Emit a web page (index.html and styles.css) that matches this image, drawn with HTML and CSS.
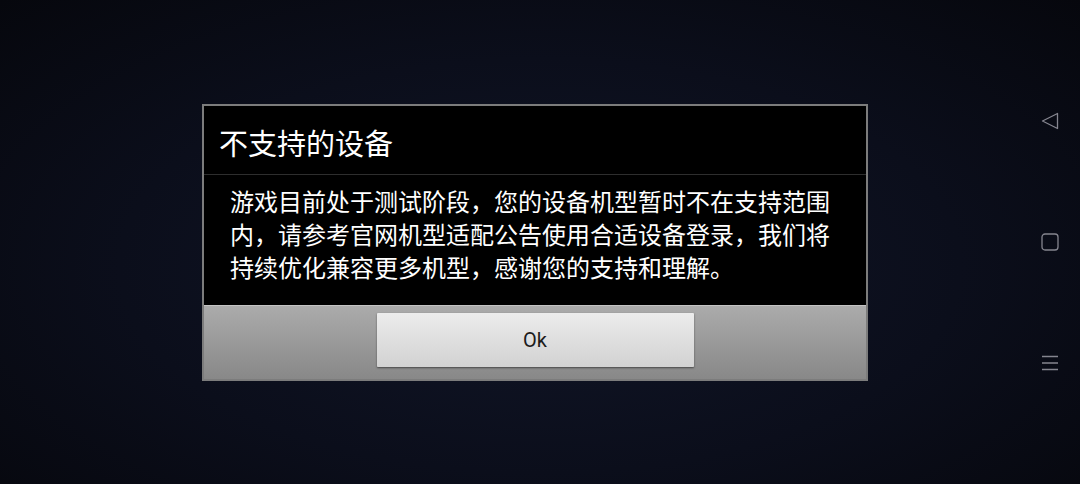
FILE: index.html
```html
<!DOCTYPE html>
<html lang="zh-CN">
<head>
    <meta charset="UTF-8">
    <meta name="viewport" content="width=device-width, initial-scale=1.0">
    <title>不支持的设备</title>
    <link rel="stylesheet" href="styles.css">
</head>
<body>
    <div class="screen">
        <main class="stage">
            <div class="dialog">
                <div class="dialog-title">不支持的设备</div>
                <div class="dialog-body">
                    <p>游戏目前处于测试阶段，您的设备机型暂时不在支持范围内，请参考官网机型适配公告使用合适设备登录，我们将持续优化兼容更多机型，感谢您的支持和理解。</p>
                </div>
                <div class="dialog-buttons">
                    <button type="button">Ok</button>
                </div>
            </div>
        </main>

        <nav class="navbar">
            <svg width="20" height="20" viewBox="0 0 20 20">
                <path d="M17.5 2.5 L2.5 10 L17.5 17.5 Z" fill="none" stroke="#85858f" stroke-width="1.3" stroke-linejoin="round"/>
            </svg>
            <svg width="20" height="20" viewBox="0 0 20 20">
                <rect x="2" y="2" width="16" height="16" rx="3" fill="none" stroke="#85858f" stroke-width="1.3"/>
            </svg>
            <svg width="20" height="20" viewBox="0 0 20 20">
                <path d="M2 3.5 H18 M2 10 H18 M2 16.5 H18" stroke="#85858f" stroke-width="1.3"/>
            </svg>
        </nav>
    </div>
</body>
</html>
```

FILE: styles.css
```css
html, body {
    margin: 0;
    padding: 0;
}
body {
    font-family: "Noto Sans CJK SC", "Noto Sans", sans-serif;
    background: radial-gradient(ellipse at 50% 55%, #111628 0%, #0b0e1b 55%, #06070d 100%);
    width: 1080px;
    height: 484px;
    overflow: hidden;
}
.screen {
    display: flex;
    height: 484px;
}
.stage {
    flex: 1;
    display: flex;
    align-items: center;
    padding-left: 202px;
    padding-top: 0;
}
.dialog {
    width: 662px;
    border: 2px solid #7c7c7c;
    background: #000;
}
.dialog-title {
    height: 69px;
    display: flex;
    align-items: center;
    padding: 4px 0 0 15px;
    box-sizing: border-box;
    color: #fff;
    font-size: 29px;
    border-bottom: 1px solid #2e2e2e;
}
.dialog-body {
    padding: 9px 30px 19px 26px;
    height: 130px;
    box-sizing: border-box;
}
.dialog-body p {
    margin: 0;
    color: #fff;
    font-size: 24px;
    line-height: 33px;
}
.dialog-buttons {
    height: 74px;
    box-sizing: border-box;
    padding-top: 7px;
    display: flex;
    justify-content: center;
    align-items: flex-start;
    background: linear-gradient(#ababab, #888);
    border-top: 1px solid #c4c4c4;
}
.dialog-buttons button {
    width: 317px;
    height: 54px;
    border: none;
    border-radius: 1px;
    background: linear-gradient(#ececec, #d2d2d2);
    box-shadow: 0 1px 2px rgba(0, 0, 0, 0.5);
    font-family: Roboto, "Noto Sans", sans-serif;
    font-size: 20px;
    color: #1c1c1c;
    padding: 0;
}
.navbar {
    width: 60px;
    display: flex;
    flex-direction: column;
    align-items: center;
    justify-content: space-between;
    padding: 111px 0 111px 0;
    box-sizing: border-box;
}
```
